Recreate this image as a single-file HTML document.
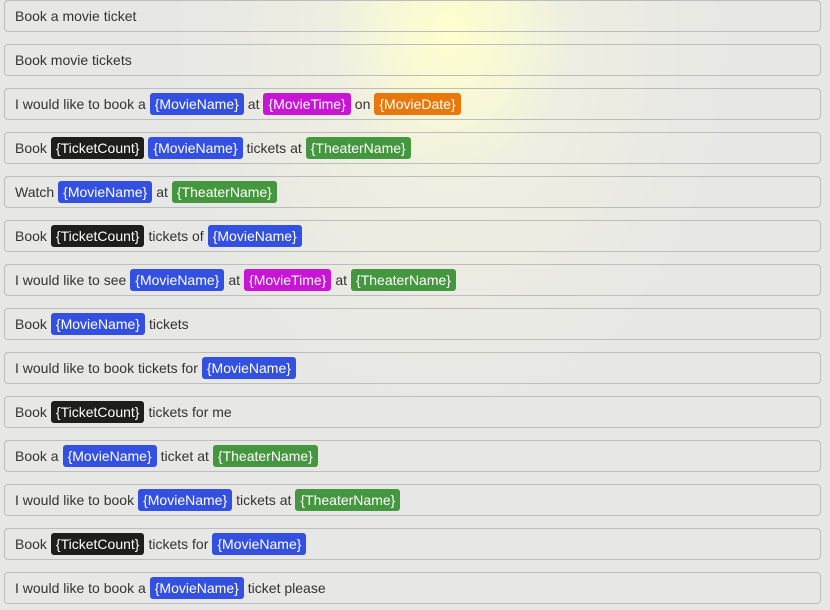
<!DOCTYPE html>
<html><head><style>
html,body{margin:0;padding:0;}
body{width:830px;height:610px;overflow:hidden;font-family:"Liberation Sans",sans-serif;font-size:14px;color:#333;
background:radial-gradient(ellipse 120px 150px at 450px 30px,rgba(255,255,205,0.95),rgba(255,255,215,0) 100%),radial-gradient(ellipse 280px 360px at 450px 50px,rgba(250,250,220,0.65),rgba(250,250,225,0) 100%),#e7e7e5;}
.row{position:absolute;left:4px;width:817px;border:1px solid #bdbdbd;border-radius:4px;display:flex;align-items:center;padding-left:10px;box-sizing:border-box;height:32px;white-space:pre;}
.c{display:inline-block;color:#fff;border-radius:3px;padding:0 5px;height:22px;line-height:22px;margin:0 4px;}
.b{background:#3450e0}.m{background:#c814d4}.o{background:#e8780c}.k{background:#1e1e1c}.g{background:#45973f}
</style></head><body>
<div class="row" style="top:0">Book a movie ticket</div>
<div class="row" style="top:44px">Book movie tickets</div>
<div class="row" style="top:88px">I would like to book a<span class="c b">{MovieName}</span>at<span class="c m">{MovieTime}</span>on<span class="c o">{MovieDate}</span></div>
<div class="row" style="top:132px">Book<span class="c k">{TicketCount}</span><span class="c b" style="margin-left:0">{MovieName}</span>tickets at<span class="c g">{TheaterName}</span></div>
<div class="row" style="top:176px">Watch<span class="c b">{MovieName}</span>at<span class="c g">{TheaterName}</span></div>
<div class="row" style="top:220px">Book<span class="c k">{TicketCount}</span>tickets of<span class="c b">{MovieName}</span></div>
<div class="row" style="top:264px">I would like to see<span class="c b">{MovieName}</span>at<span class="c m">{MovieTime}</span>at<span class="c g">{TheaterName}</span></div>
<div class="row" style="top:308px">Book<span class="c b">{MovieName}</span>tickets</div>
<div class="row" style="top:352px">I would like to book tickets for<span class="c b">{MovieName}</span></div>
<div class="row" style="top:396px">Book<span class="c k">{TicketCount}</span>tickets for me</div>
<div class="row" style="top:440px">Book a<span class="c b">{MovieName}</span>ticket at<span class="c g">{TheaterName}</span></div>
<div class="row" style="top:484px">I would like to book<span class="c b">{MovieName}</span>tickets at<span class="c g">{TheaterName}</span></div>
<div class="row" style="top:528px">Book<span class="c k">{TicketCount}</span>tickets for<span class="c b">{MovieName}</span></div>
<div class="row" style="top:572px">I would like to book a<span class="c b">{MovieName}</span>ticket please</div>
</body></html>
